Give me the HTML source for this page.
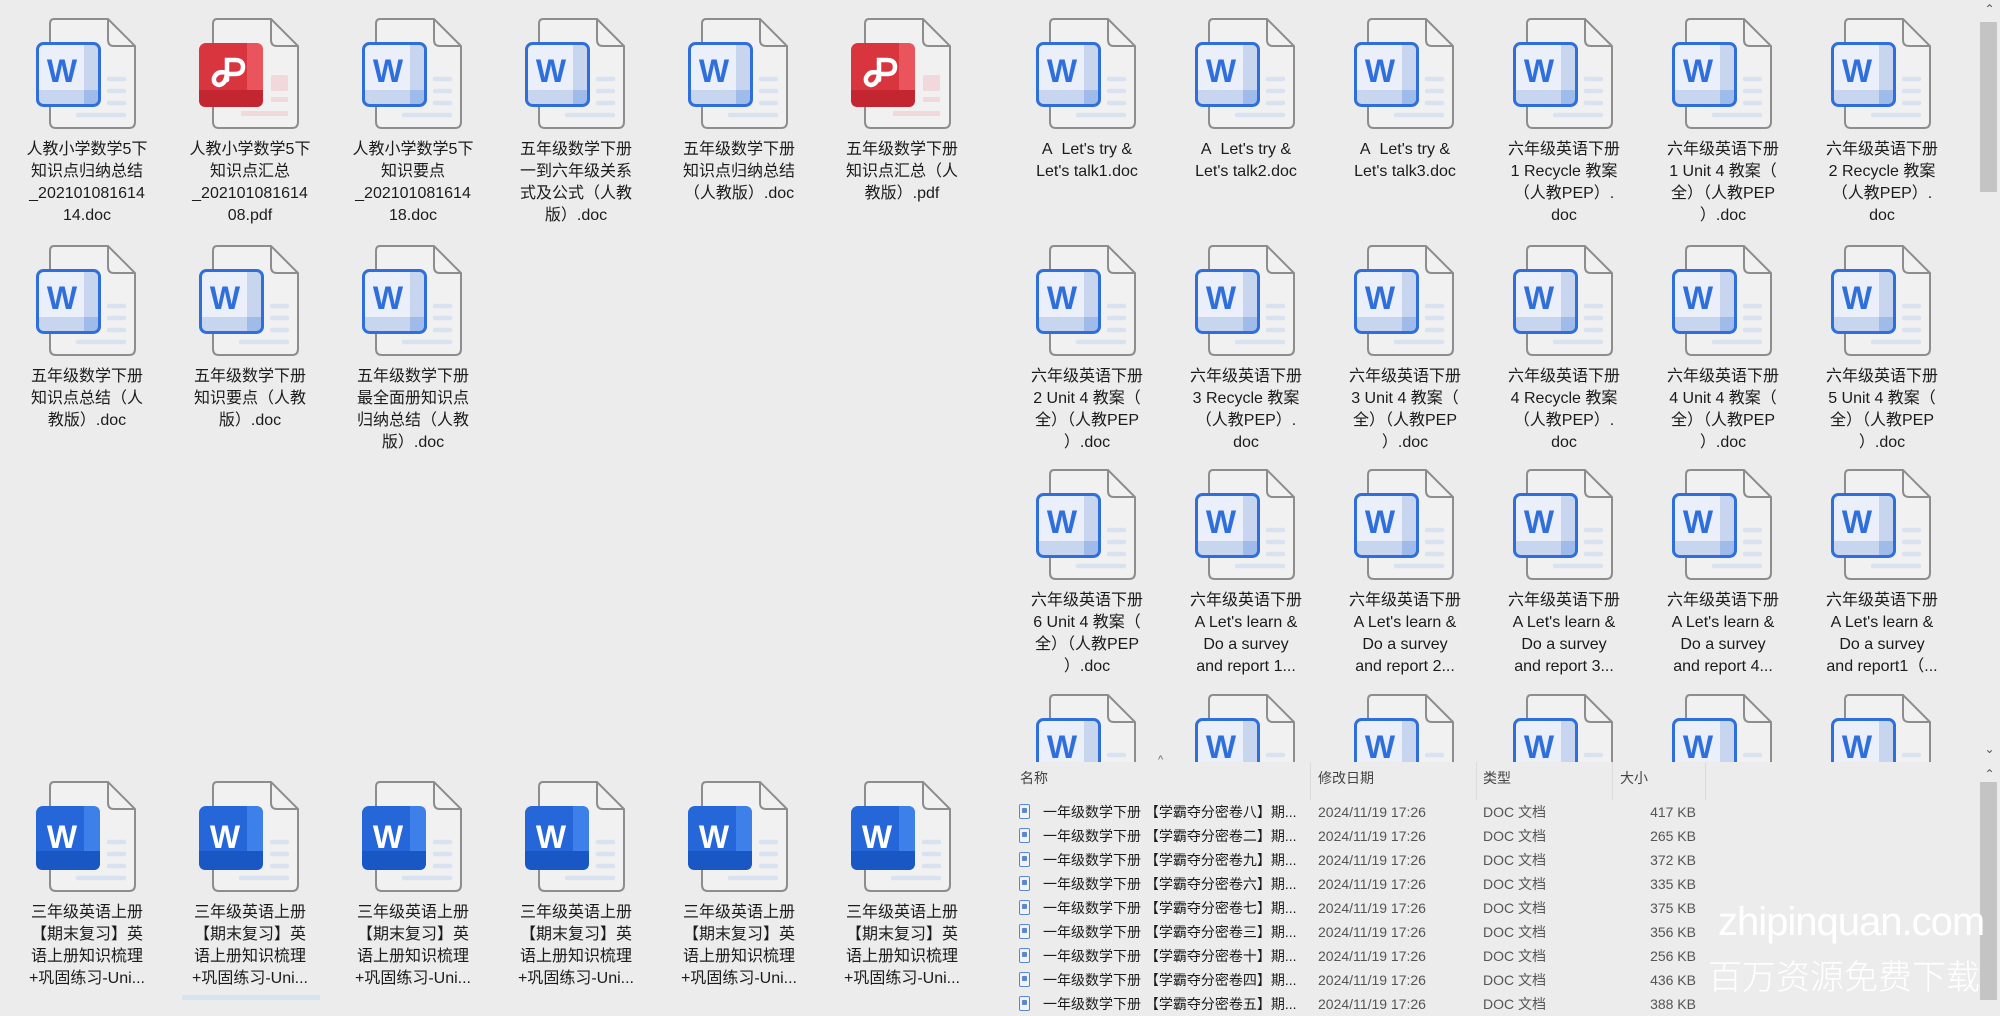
<!DOCTYPE html>
<html><head><meta charset="utf-8"><style>
*{margin:0;padding:0;box-sizing:border-box}
html,body{width:2000px;height:1000px;overflow:hidden;background:#ececec;font-family:"Liberation Sans","Noto Sans CJK SC",sans-serif;color:#1b1b1b}
.it{position:absolute;width:120px;height:115px}
.it svg{position:absolute;left:0;top:0}
.lb{position:absolute;top:121px;left:-14px;width:130px;text-align:center;font-size:16px;line-height:22px;white-space:nowrap}
#rp{position:absolute;left:1000px;top:0;width:979px;height:762px;overflow:hidden}
#rp .it{margin-left:-1000px}
.th{position:absolute;left:1980px;width:17px;background:#c4c4c4}
.ar{position:absolute;left:1979px;width:21px;text-align:center;font-size:12px;color:#555}
.hd{position:absolute;top:768px;font-size:14px;color:#444}
.sep{position:absolute;top:762px;width:1px;height:38px;background:#dcdcdc}
.row{position:absolute;left:1000px;height:24px;width:720px;font-size:14px;line-height:24px;white-space:nowrap}
.row span{position:absolute;top:0}
.row .ic{left:19px;top:4px;width:11px;height:15px;border:1.5px solid #5b86d6;border-radius:2px;background:#eef3fc}
.row .ic:after{content:"";position:absolute;left:2px;top:3px;width:5px;height:5px;background:#5b86d6;border-radius:1px}
.n{left:43px}.d{left:318px;color:#555}.t{left:483px;color:#555}.s{right:24px;color:#555}
.wm{position:absolute;color:#fff;font-weight:300;white-space:nowrap}
</style></head><body>
<svg width="0" height="0" style="position:absolute">
<defs>
<symbol id="pg" viewBox="0 0 120 115">
<path d="M18 1 H72 L99 28 V104 Q99 110 93 110 H20 Q14 110 14 104 V6 Q14 1 18 1 Z" fill="#f1f1f1" stroke="#8d8d8d" stroke-width="2"/>
<path d="M72 1 V22 Q72 28 78 28 H99" fill="none" stroke="#8d8d8d" stroke-width="2"/>
</symbol>
<symbol id="wl" viewBox="0 0 120 115">
<g stroke="#d9e2f1" stroke-width="4.5" stroke-linecap="round"><line x1="73" y1="61" x2="88" y2="61"/><line x1="73" y1="73" x2="88" y2="73"/><line x1="73" y1="85" x2="88" y2="85"/><line x1="42" y1="97" x2="88" y2="97"/></g>
</symbol>
<symbol id="ws" viewBox="0 0 120 115">
<rect x="1.5" y="25.5" width="62" height="62" rx="6" fill="#eaeff9"/>
<path d="M48 25.5 H57.5 Q63.5 25.5 63.5 31.5 V81.5 Q63.5 87.5 57.5 87.5 H48 Z" fill="#c7d5ef"/>
<path d="M1.5 72 H63.5 V81.5 Q63.5 87.5 57.5 87.5 H7.5 Q1.5 87.5 1.5 81.5 Z" fill="#c7d5ef"/>
<path d="M48 72 H63.5 V81.5 Q63.5 87.5 57.5 87.5 H48 Z" fill="#9fbbe9"/>
<rect x="1.5" y="25.5" width="62" height="62" rx="6" fill="none" stroke="#2f6fdb" stroke-width="3"/>
</symbol>
<symbol id="wb" viewBox="0 0 120 115">
<rect x="0" y="25" width="64" height="64" rx="7" fill="#2567d8"/>
<path d="M48 25 H57 Q64 25 64 32 V82 Q64 89 57 89 H48 Z" fill="#3d80ea"/>
<path d="M0 70 H64 V82 Q64 89 57 89 H7 Q0 89 0 82 Z" fill="#1957c4"/>
</symbol>
<symbol id="pd" viewBox="0 0 120 115">
<g fill="#f1d8da"><rect x="72" y="57" width="17" height="16" rx="2"/><rect x="72" y="79" width="17" height="5"/><rect x="42" y="93" width="47" height="5"/></g>
<rect x="0" y="25" width="64" height="64" rx="7" fill="#d8353f"/>
<path d="M48 25 H57 Q64 25 64 32 V82 Q64 89 57 89 H48 Z" fill="#e9545d"/>
<path d="M0 72 H64 V82 Q64 89 57 89 H7 Q0 89 0 82 Z" fill="#c42631"/>
<path d="M28 55 V42 H36 Q44 42 44 49 Q44 56 36 56 H28 M28 55 Q18 52 15 60 Q14 66 20 67 Q27 66 28 55 V62" fill="none" stroke="#fff" stroke-width="4.5" stroke-linecap="round"/>
</symbol>
</defs></svg>

<!-- LEFT TOP -->
<div class="it" style="left:36px;top:18px"><svg width="120" height="115"><use href="#pg"/><use href="#wl"/><use href="#ws"/><text x="26" y="64" text-anchor="middle" font-family="Liberation Sans" font-weight="bold" font-size="32" fill="#2f6fdb">W</text></svg><div class="lb">人教小学数学5下<br>知识点归纳总结<br>_202101081614<br>14.doc</div></div>
<div class="it" style="left:199px;top:18px"><svg width="120" height="115"><use href="#pg"/><use href="#pd"/></svg><div class="lb">人教小学数学5下<br>知识点汇总<br>_202101081614<br>08.pdf</div></div>
<div class="it" style="left:362px;top:18px"><svg width="120" height="115"><use href="#pg"/><use href="#wl"/><use href="#ws"/><text x="26" y="64" text-anchor="middle" font-family="Liberation Sans" font-weight="bold" font-size="32" fill="#2f6fdb">W</text></svg><div class="lb">人教小学数学5下<br>知识要点<br>_202101081614<br>18.doc</div></div>
<div class="it" style="left:525px;top:18px"><svg width="120" height="115"><use href="#pg"/><use href="#wl"/><use href="#ws"/><text x="26" y="64" text-anchor="middle" font-family="Liberation Sans" font-weight="bold" font-size="32" fill="#2f6fdb">W</text></svg><div class="lb">五年级数学下册<br>一到六年级关系<br>式及公式（人教<br>版）.doc</div></div>
<div class="it" style="left:688px;top:18px"><svg width="120" height="115"><use href="#pg"/><use href="#wl"/><use href="#ws"/><text x="26" y="64" text-anchor="middle" font-family="Liberation Sans" font-weight="bold" font-size="32" fill="#2f6fdb">W</text></svg><div class="lb">五年级数学下册<br>知识点归纳总结<br>（人教版）.doc</div></div>
<div class="it" style="left:851px;top:18px"><svg width="120" height="115"><use href="#pg"/><use href="#pd"/></svg><div class="lb">五年级数学下册<br>知识点汇总（人<br>教版）.pdf</div></div>

<div class="it" style="left:36px;top:245px"><svg width="120" height="115"><use href="#pg"/><use href="#wl"/><use href="#ws"/><text x="26" y="64" text-anchor="middle" font-family="Liberation Sans" font-weight="bold" font-size="32" fill="#2f6fdb">W</text></svg><div class="lb">五年级数学下册<br>知识点总结（人<br>教版）.doc</div></div>
<div class="it" style="left:199px;top:245px"><svg width="120" height="115"><use href="#pg"/><use href="#wl"/><use href="#ws"/><text x="26" y="64" text-anchor="middle" font-family="Liberation Sans" font-weight="bold" font-size="32" fill="#2f6fdb">W</text></svg><div class="lb">五年级数学下册<br>知识要点（人教<br>版）.doc</div></div>
<div class="it" style="left:362px;top:245px"><svg width="120" height="115"><use href="#pg"/><use href="#wl"/><use href="#ws"/><text x="26" y="64" text-anchor="middle" font-family="Liberation Sans" font-weight="bold" font-size="32" fill="#2f6fdb">W</text></svg><div class="lb">五年级数学下册<br>最全面册知识点<br>归纳总结（人教<br>版）.doc</div></div>

<!-- LEFT BOTTOM -->
<div style="position:absolute;left:182px;top:995px;width:138px;height:5px;background:#d6e3f3"></div>
<div class="it" style="left:36px;top:781px"><svg width="120" height="115"><use href="#pg"/><use href="#wl"/><use href="#wb"/><text x="26" y="67" text-anchor="middle" font-family="Liberation Sans" font-weight="bold" font-size="32" fill="#fff">W</text></svg><div class="lb">三年级英语上册<br>【期末复习】英<br>语上册知识梳理<br>+巩固练习-Uni...</div></div>
<div class="it" style="left:199px;top:781px"><svg width="120" height="115"><use href="#pg"/><use href="#wl"/><use href="#wb"/><text x="26" y="67" text-anchor="middle" font-family="Liberation Sans" font-weight="bold" font-size="32" fill="#fff">W</text></svg><div class="lb">三年级英语上册<br>【期末复习】英<br>语上册知识梳理<br>+巩固练习-Uni...</div></div>
<div class="it" style="left:362px;top:781px"><svg width="120" height="115"><use href="#pg"/><use href="#wl"/><use href="#wb"/><text x="26" y="67" text-anchor="middle" font-family="Liberation Sans" font-weight="bold" font-size="32" fill="#fff">W</text></svg><div class="lb">三年级英语上册<br>【期末复习】英<br>语上册知识梳理<br>+巩固练习-Uni...</div></div>
<div class="it" style="left:525px;top:781px"><svg width="120" height="115"><use href="#pg"/><use href="#wl"/><use href="#wb"/><text x="26" y="67" text-anchor="middle" font-family="Liberation Sans" font-weight="bold" font-size="32" fill="#fff">W</text></svg><div class="lb">三年级英语上册<br>【期末复习】英<br>语上册知识梳理<br>+巩固练习-Uni...</div></div>
<div class="it" style="left:688px;top:781px"><svg width="120" height="115"><use href="#pg"/><use href="#wl"/><use href="#wb"/><text x="26" y="67" text-anchor="middle" font-family="Liberation Sans" font-weight="bold" font-size="32" fill="#fff">W</text></svg><div class="lb">三年级英语上册<br>【期末复习】英<br>语上册知识梳理<br>+巩固练习-Uni...</div></div>
<div class="it" style="left:851px;top:781px"><svg width="120" height="115"><use href="#pg"/><use href="#wl"/><use href="#wb"/><text x="26" y="67" text-anchor="middle" font-family="Liberation Sans" font-weight="bold" font-size="32" fill="#fff">W</text></svg><div class="lb">三年级英语上册<br>【期末复习】英<br>语上册知识梳理<br>+巩固练习-Uni...</div></div>

<!-- RIGHT PANE -->
<div id="rp">
<div class="it" style="left:1036px;top:18px"><svg width="120" height="115"><use href="#pg"/><use href="#wl"/><use href="#ws"/><text x="26" y="64" text-anchor="middle" font-family="Liberation Sans" font-weight="bold" font-size="32" fill="#2f6fdb">W</text></svg><div class="lb">A&nbsp; Let's try &amp;<br>Let's talk1.doc</div></div>
<div class="it" style="left:1195px;top:18px"><svg width="120" height="115"><use href="#pg"/><use href="#wl"/><use href="#ws"/><text x="26" y="64" text-anchor="middle" font-family="Liberation Sans" font-weight="bold" font-size="32" fill="#2f6fdb">W</text></svg><div class="lb">A&nbsp; Let's try &amp;<br>Let's talk2.doc</div></div>
<div class="it" style="left:1354px;top:18px"><svg width="120" height="115"><use href="#pg"/><use href="#wl"/><use href="#ws"/><text x="26" y="64" text-anchor="middle" font-family="Liberation Sans" font-weight="bold" font-size="32" fill="#2f6fdb">W</text></svg><div class="lb">A&nbsp; Let's try &amp;<br>Let's talk3.doc</div></div>
<div class="it" style="left:1513px;top:18px"><svg width="120" height="115"><use href="#pg"/><use href="#wl"/><use href="#ws"/><text x="26" y="64" text-anchor="middle" font-family="Liberation Sans" font-weight="bold" font-size="32" fill="#2f6fdb">W</text></svg><div class="lb">六年级英语下册<br>1 Recycle 教案<br>（人教PEP）.<br>doc</div></div>
<div class="it" style="left:1672px;top:18px"><svg width="120" height="115"><use href="#pg"/><use href="#wl"/><use href="#ws"/><text x="26" y="64" text-anchor="middle" font-family="Liberation Sans" font-weight="bold" font-size="32" fill="#2f6fdb">W</text></svg><div class="lb">六年级英语下册<br>1 Unit 4 教案（<br>全）（人教PEP<br>）.doc</div></div>
<div class="it" style="left:1831px;top:18px"><svg width="120" height="115"><use href="#pg"/><use href="#wl"/><use href="#ws"/><text x="26" y="64" text-anchor="middle" font-family="Liberation Sans" font-weight="bold" font-size="32" fill="#2f6fdb">W</text></svg><div class="lb">六年级英语下册<br>2 Recycle 教案<br>（人教PEP）.<br>doc</div></div>

<div class="it" style="left:1036px;top:245px"><svg width="120" height="115"><use href="#pg"/><use href="#wl"/><use href="#ws"/><text x="26" y="64" text-anchor="middle" font-family="Liberation Sans" font-weight="bold" font-size="32" fill="#2f6fdb">W</text></svg><div class="lb">六年级英语下册<br>2 Unit 4 教案（<br>全）（人教PEP<br>）.doc</div></div>
<div class="it" style="left:1195px;top:245px"><svg width="120" height="115"><use href="#pg"/><use href="#wl"/><use href="#ws"/><text x="26" y="64" text-anchor="middle" font-family="Liberation Sans" font-weight="bold" font-size="32" fill="#2f6fdb">W</text></svg><div class="lb">六年级英语下册<br>3 Recycle 教案<br>（人教PEP）.<br>doc</div></div>
<div class="it" style="left:1354px;top:245px"><svg width="120" height="115"><use href="#pg"/><use href="#wl"/><use href="#ws"/><text x="26" y="64" text-anchor="middle" font-family="Liberation Sans" font-weight="bold" font-size="32" fill="#2f6fdb">W</text></svg><div class="lb">六年级英语下册<br>3 Unit 4 教案（<br>全）（人教PEP<br>）.doc</div></div>
<div class="it" style="left:1513px;top:245px"><svg width="120" height="115"><use href="#pg"/><use href="#wl"/><use href="#ws"/><text x="26" y="64" text-anchor="middle" font-family="Liberation Sans" font-weight="bold" font-size="32" fill="#2f6fdb">W</text></svg><div class="lb">六年级英语下册<br>4 Recycle 教案<br>（人教PEP）.<br>doc</div></div>
<div class="it" style="left:1672px;top:245px"><svg width="120" height="115"><use href="#pg"/><use href="#wl"/><use href="#ws"/><text x="26" y="64" text-anchor="middle" font-family="Liberation Sans" font-weight="bold" font-size="32" fill="#2f6fdb">W</text></svg><div class="lb">六年级英语下册<br>4 Unit 4 教案（<br>全）（人教PEP<br>）.doc</div></div>
<div class="it" style="left:1831px;top:245px"><svg width="120" height="115"><use href="#pg"/><use href="#wl"/><use href="#ws"/><text x="26" y="64" text-anchor="middle" font-family="Liberation Sans" font-weight="bold" font-size="32" fill="#2f6fdb">W</text></svg><div class="lb">六年级英语下册<br>5 Unit 4 教案（<br>全）（人教PEP<br>）.doc</div></div>

<div class="it" style="left:1036px;top:469px"><svg width="120" height="115"><use href="#pg"/><use href="#wl"/><use href="#ws"/><text x="26" y="64" text-anchor="middle" font-family="Liberation Sans" font-weight="bold" font-size="32" fill="#2f6fdb">W</text></svg><div class="lb">六年级英语下册<br>6 Unit 4 教案（<br>全）（人教PEP<br>）.doc</div></div>
<div class="it" style="left:1195px;top:469px"><svg width="120" height="115"><use href="#pg"/><use href="#wl"/><use href="#ws"/><text x="26" y="64" text-anchor="middle" font-family="Liberation Sans" font-weight="bold" font-size="32" fill="#2f6fdb">W</text></svg><div class="lb">六年级英语下册<br>A Let's learn &amp;<br>Do a survey<br>and report 1...</div></div>
<div class="it" style="left:1354px;top:469px"><svg width="120" height="115"><use href="#pg"/><use href="#wl"/><use href="#ws"/><text x="26" y="64" text-anchor="middle" font-family="Liberation Sans" font-weight="bold" font-size="32" fill="#2f6fdb">W</text></svg><div class="lb">六年级英语下册<br>A Let's learn &amp;<br>Do a survey<br>and report 2...</div></div>
<div class="it" style="left:1513px;top:469px"><svg width="120" height="115"><use href="#pg"/><use href="#wl"/><use href="#ws"/><text x="26" y="64" text-anchor="middle" font-family="Liberation Sans" font-weight="bold" font-size="32" fill="#2f6fdb">W</text></svg><div class="lb">六年级英语下册<br>A Let's learn &amp;<br>Do a survey<br>and report 3...</div></div>
<div class="it" style="left:1672px;top:469px"><svg width="120" height="115"><use href="#pg"/><use href="#wl"/><use href="#ws"/><text x="26" y="64" text-anchor="middle" font-family="Liberation Sans" font-weight="bold" font-size="32" fill="#2f6fdb">W</text></svg><div class="lb">六年级英语下册<br>A Let's learn &amp;<br>Do a survey<br>and report 4...</div></div>
<div class="it" style="left:1831px;top:469px"><svg width="120" height="115"><use href="#pg"/><use href="#wl"/><use href="#ws"/><text x="26" y="64" text-anchor="middle" font-family="Liberation Sans" font-weight="bold" font-size="32" fill="#2f6fdb">W</text></svg><div class="lb">六年级英语下册<br>A Let's learn &amp;<br>Do a survey<br>and report1（...</div></div>

<div class="it" style="left:1036px;top:694px"><svg width="120" height="115"><use href="#pg"/><use href="#wl"/><use href="#ws"/><text x="26" y="64" text-anchor="middle" font-family="Liberation Sans" font-weight="bold" font-size="32" fill="#2f6fdb">W</text></svg></div>
<div class="it" style="left:1195px;top:694px"><svg width="120" height="115"><use href="#pg"/><use href="#wl"/><use href="#ws"/><text x="26" y="64" text-anchor="middle" font-family="Liberation Sans" font-weight="bold" font-size="32" fill="#2f6fdb">W</text></svg></div>
<div class="it" style="left:1354px;top:694px"><svg width="120" height="115"><use href="#pg"/><use href="#wl"/><use href="#ws"/><text x="26" y="64" text-anchor="middle" font-family="Liberation Sans" font-weight="bold" font-size="32" fill="#2f6fdb">W</text></svg></div>
<div class="it" style="left:1513px;top:694px"><svg width="120" height="115"><use href="#pg"/><use href="#wl"/><use href="#ws"/><text x="26" y="64" text-anchor="middle" font-family="Liberation Sans" font-weight="bold" font-size="32" fill="#2f6fdb">W</text></svg></div>
<div class="it" style="left:1672px;top:694px"><svg width="120" height="115"><use href="#pg"/><use href="#wl"/><use href="#ws"/><text x="26" y="64" text-anchor="middle" font-family="Liberation Sans" font-weight="bold" font-size="32" fill="#2f6fdb">W</text></svg></div>
<div class="it" style="left:1831px;top:694px"><svg width="120" height="115"><use href="#pg"/><use href="#wl"/><use href="#ws"/><text x="26" y="64" text-anchor="middle" font-family="Liberation Sans" font-weight="bold" font-size="32" fill="#2f6fdb">W</text></svg></div>
</div>

<!-- scrollbars -->
<div class="ar" style="top:2px">&#8963;</div>
<div class="th" style="top:22px;height:170px"></div>
<div class="ar" style="top:742px">&#8964;</div>
<div class="ar" style="top:767px">&#8963;</div>
<div class="th" style="top:782px;height:218px"></div>

<!-- details header -->
<div class="hd" style="left:1020px">名称</div>
<div style="position:absolute;left:1158px;top:754px;font-size:11px;color:#666">^</div>
<div class="sep" style="left:1310px"></div>
<div class="hd" style="left:1318px">修改日期</div>
<div class="sep" style="left:1476px"></div>
<div class="hd" style="left:1483px">类型</div>
<div class="sep" style="left:1612px"></div>
<div class="hd" style="left:1620px">大小</div>
<div class="sep" style="left:1705px"></div>

<div class="row" style="top:800px"><span class="ic"></span><span class="n">一年级数学下册 【学霸夺分密卷八】期...</span><span class="d">2024/11/19 17:26</span><span class="t">DOC 文档</span><span class="s">417 KB</span></div>
<div class="row" style="top:824px"><span class="ic"></span><span class="n">一年级数学下册 【学霸夺分密卷二】期...</span><span class="d">2024/11/19 17:26</span><span class="t">DOC 文档</span><span class="s">265 KB</span></div>
<div class="row" style="top:848px"><span class="ic"></span><span class="n">一年级数学下册 【学霸夺分密卷九】期...</span><span class="d">2024/11/19 17:26</span><span class="t">DOC 文档</span><span class="s">372 KB</span></div>
<div class="row" style="top:872px"><span class="ic"></span><span class="n">一年级数学下册 【学霸夺分密卷六】期...</span><span class="d">2024/11/19 17:26</span><span class="t">DOC 文档</span><span class="s">335 KB</span></div>
<div class="row" style="top:896px"><span class="ic"></span><span class="n">一年级数学下册 【学霸夺分密卷七】期...</span><span class="d">2024/11/19 17:26</span><span class="t">DOC 文档</span><span class="s">375 KB</span></div>
<div class="row" style="top:920px"><span class="ic"></span><span class="n">一年级数学下册 【学霸夺分密卷三】期...</span><span class="d">2024/11/19 17:26</span><span class="t">DOC 文档</span><span class="s">356 KB</span></div>
<div class="row" style="top:944px"><span class="ic"></span><span class="n">一年级数学下册 【学霸夺分密卷十】期...</span><span class="d">2024/11/19 17:26</span><span class="t">DOC 文档</span><span class="s">256 KB</span></div>
<div class="row" style="top:968px"><span class="ic"></span><span class="n">一年级数学下册 【学霸夺分密卷四】期...</span><span class="d">2024/11/19 17:26</span><span class="t">DOC 文档</span><span class="s">436 KB</span></div>
<div class="row" style="top:992px"><span class="ic"></span><span class="n">一年级数学下册 【学霸夺分密卷五】期...</span><span class="d">2024/11/19 17:26</span><span class="t">DOC 文档</span><span class="s">388 KB</span></div>

<div class="wm" style="left:1718px;top:900px;font-size:40px;letter-spacing:-1px">zhipinquan.com</div>
<div class="wm" style="left:1708px;top:950px;font-size:34px;font-family:'Noto Sans CJK SC',sans-serif">百万资源免费下载</div>
</body></html>
